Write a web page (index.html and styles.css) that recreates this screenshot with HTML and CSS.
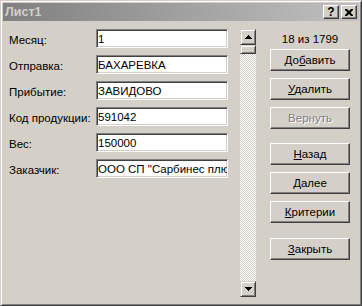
FILE: index.html
```html
<!DOCTYPE html>
<html lang="ru">
<head>
    <meta charset="UTF-8">
    <title>Лист1</title>
    <link rel="stylesheet" href="styles.css">
</head>
<body>
    <div class="window">
        <div class="titlebar">
            <span class="title">Лист1</span>
            <div class="caption-buttons">
                <button class="cap-btn">?</button>
                <button class="cap-btn">
                    <svg width="8" height="7" viewBox="0 0 8 7">
                        <path d="M0 0h2l2 2 2-2h2v1l-2.5 2.5 2.5 2.5v1h-2l-2-2-2 2h-2v-1l2.5-2.5-2.5-2.5z" fill="#000"/>
                    </svg>
                </button>
            </div>
        </div>

        <div class="content">
            <div class="fields">
                <div class="field"><label>Месяц:</label><input class="textbox" type="text" value="1"></div>
                <div class="field"><label>Отправка:</label><input class="textbox" type="text" value="БАХАРЕВКА"></div>
                <div class="field"><label>Прибытие:</label><input class="textbox" type="text" value="ЗАВИДОВО"></div>
                <div class="field"><label>Код продукции:</label><input class="textbox" type="text" value="591042"></div>
                <div class="field"><label>Вес:</label><input class="textbox" type="text" value="150000"></div>
                <div class="field"><label>Заказчик:</label><input class="textbox" type="text" value='ООО СП "Сарбинес плюс"'></div>
            </div>

            <div class="scrollbar">
                <div class="sb-btn">
                    <svg width="7" height="4" viewBox="0 0 7 4"><path d="M3 0h1v1h1v1h1v1h1v1h-7v-1h1v-1h1v-1h1z" fill="#000"/></svg>
                </div>
                <div class="sb-track"><div class="sb-thumb"></div></div>
                <div class="sb-btn">
                    <svg width="7" height="4" viewBox="0 0 7 4"><path d="M0 0h7v1h-1v1h-1v1h-1v1h-1v-1h-1v-1h-1v-1h-1z" fill="#000"/></svg>
                </div>
            </div>

            <div class="actions">
                <div class="counter">18 из 1799</div>
                <button class="btn">До<u>б</u>авить</button>
                <button class="btn"><u>У</u>далить</button>
                <button class="btn" disabled>Вернуть</button>
                <button class="btn group"><u>Н</u>азад</button>
                <button class="btn"><u>Д</u>алее</button>
                <button class="btn"><u>К</u>ритерии</button>
                <button class="btn group last"><u>З</u>акрыть</button>
            </div>
        </div>
    </div>
</body>
</html>
```

FILE: styles.css
```css
body {
    margin: 0;
    font-family: "Liberation Sans", Arial, sans-serif;
    font-size: 11.5px;
    color: #000;
}
.window {
    width: 362px;
    height: 306px;
    box-sizing: border-box;
    background: #d4d0c8;
    border: 1px solid;
    border-color: #d4d0c8 #404040 #404040 #d4d0c8;
    box-shadow: inset 1px 1px #fff, inset -1px -1px #808080;
    padding: 2px;
    display: flex;
    flex-direction: column;
}
.titlebar {
    height: 18px;
    background: linear-gradient(to right, #808080, #c0c0c0);
    display: flex;
    align-items: center;
    justify-content: space-between;
    padding: 0 2px;
}
.title {
    color: #d4d0c8;
    font-weight: bold;
    font-size: 12.5px;
}
.caption-buttons {
    display: flex;
    gap: 2px;
}
.cap-btn {
    width: 16px;
    height: 14px;
    padding: 0;
    box-sizing: border-box;
    background: #d4d0c8;
    border: 1px solid;
    border-color: #fff #404040 #404040 #fff;
    box-shadow: inset -1px -1px #808080;
    font-family: "Liberation Sans", Arial, sans-serif;
    font-weight: bold;
    font-size: 12px;
    line-height: 10px;
    display: flex;
    align-items: center;
    justify-content: center;
}
.content {
    flex: 1;
    display: flex;
    align-items: flex-start;
    padding: 8px 0 0 6px;
}
.fields {
    display: flex;
    flex-direction: column;
    gap: 7px;
}
.field {
    display: flex;
    height: 19px;
}
.field label {
    width: 87px;
    padding-top: 3px;
    line-height: 16px;
}
.textbox {
    width: 132px;
    height: 19px;
    box-sizing: border-box;
    margin: 0;
    padding: 0 0 0 1px;
    background: #fff;
    border: 1px solid;
    border-color: #808080 #fff #fff #808080;
    box-shadow: inset 1px 1px #404040, inset -1px -1px #d4d0c8;
    font-family: "Liberation Sans", Arial, sans-serif;
    font-size: 11.5px;
    color: #000;
    outline: none;
}
.scrollbar {
    width: 16px;
    height: 268px;
    margin-left: 12px;
    display: flex;
    flex-direction: column;
}
.sb-btn {
    width: 16px;
    height: 16px;
    box-sizing: border-box;
    background: #d4d0c8;
    border: 1px solid;
    border-color: #d4d0c8 #404040 #404040 #d4d0c8;
    box-shadow: inset 1px 1px #fff, inset -1px -1px #808080;
    display: flex;
    align-items: center;
    justify-content: center;
}
.sb-track {
    flex: 1;
    background: repeating-conic-gradient(#d4d0c8 0 25%, #fff 0 50%) 0 0 / 2px 2px;
}
.sb-thumb {
    height: 9px;
    box-sizing: border-box;
    background: #d4d0c8;
    border: 1px solid;
    border-color: #d4d0c8 #404040 #404040 #d4d0c8;
    box-shadow: inset 1px 1px #fff, inset -1px -1px #808080;
}
.actions {
    width: 80px;
    margin-left: 14px;
    display: flex;
    flex-direction: column;
}
.counter {
    height: 20px;
    line-height: 20px;
    text-align: center;
}
.btn {
    width: 80px;
    height: 22px;
    margin-bottom: 7px;
    padding: 0;
    box-sizing: border-box;
    background: #d4d0c8;
    border: 1px solid;
    border-color: #fff #404040 #404040 #fff;
    box-shadow: inset -1px -1px #808080;
    font-family: "Liberation Sans", Arial, sans-serif;
    font-size: 11.5px;
    color: #000;
}
.btn.group { margin-top: 7px; }
.btn.last { margin-top: 8px; }
.btn:disabled {
    color: #808080;
    text-shadow: 1px 1px #fff;
}
```
